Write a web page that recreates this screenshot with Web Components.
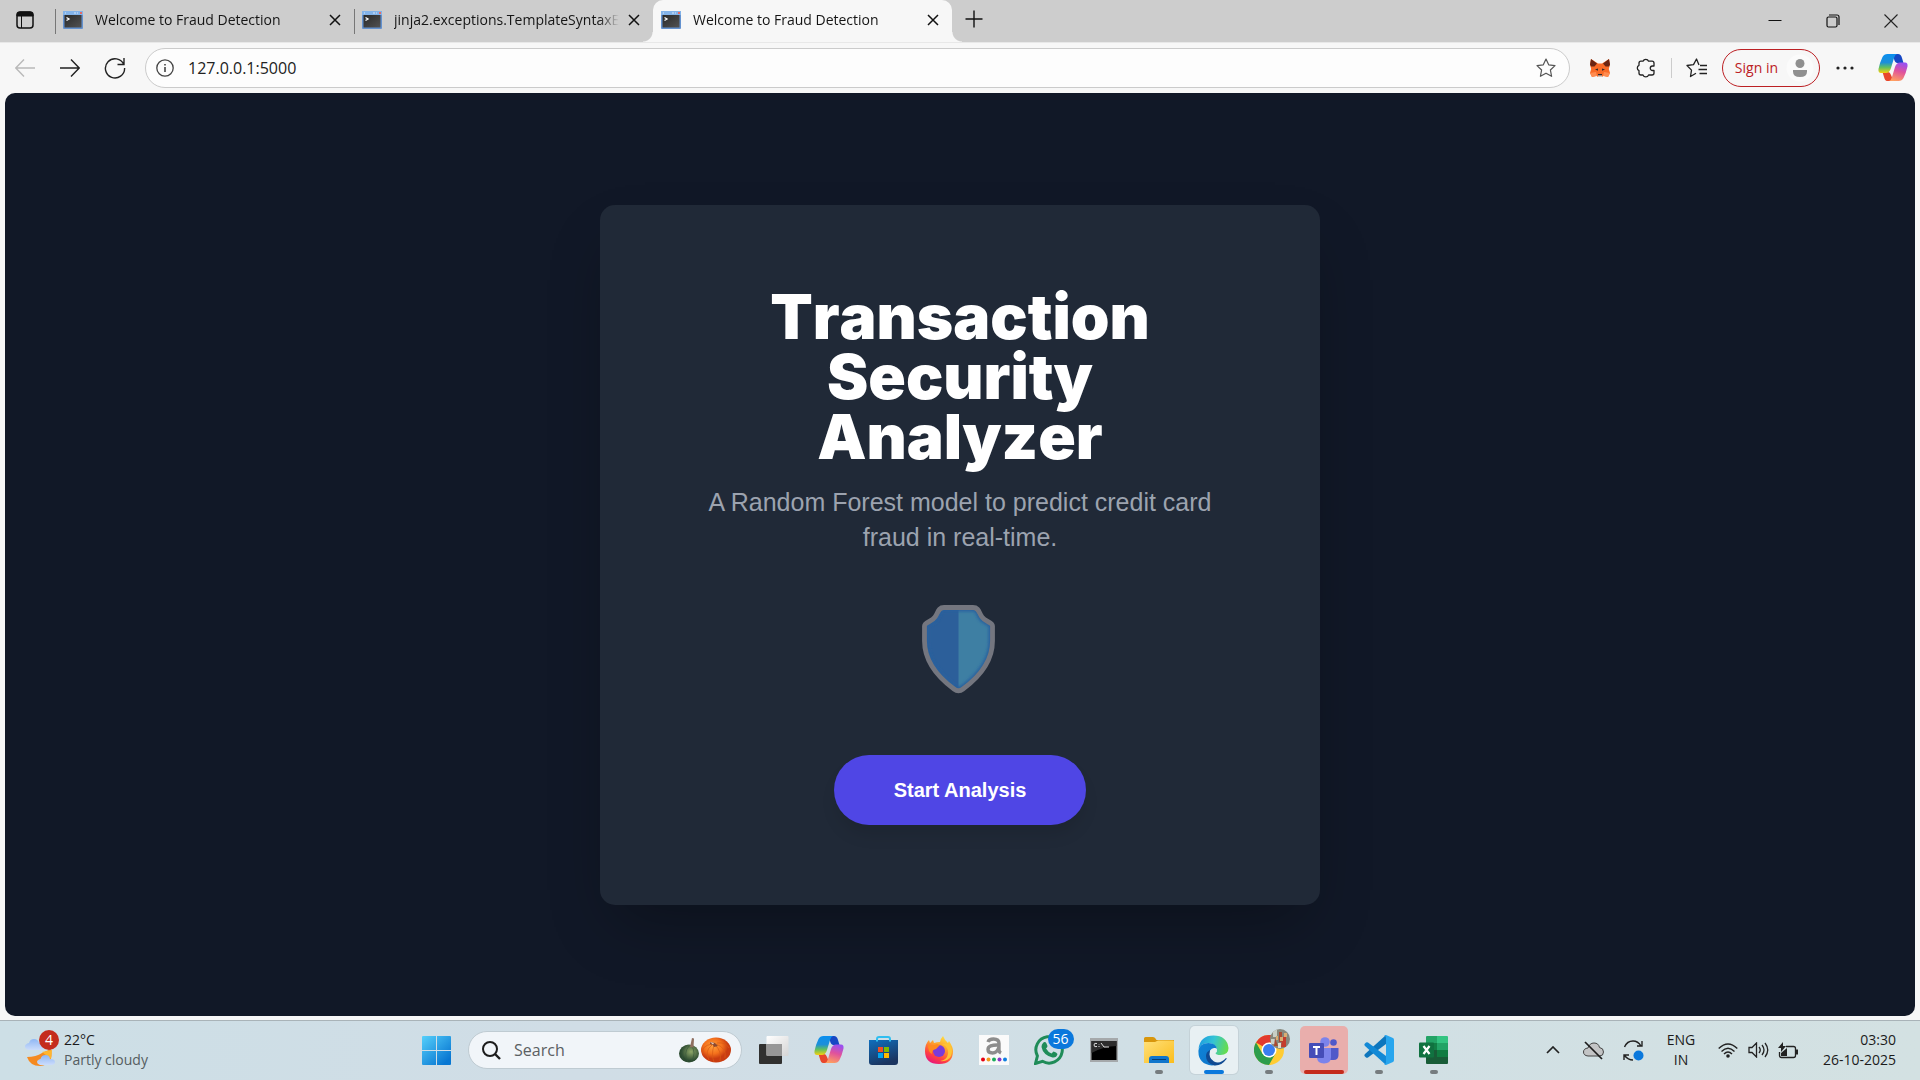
<!DOCTYPE html>
<html lang="en">
<head>
<meta charset="utf-8">
<title>Welcome to Fraud Detection</title>
<style>
html,body{margin:0;height:100%}
body{font-family:"Open Sans","Noto Sans",sans-serif;font-size:14px;line-height:20px;color:#1b1b1b;overflow:hidden}
</style>
</head>
<body>
<desktop-screen></desktop-screen>
<script>
const copilot = p => `<svg width="30" height="30" viewBox="0 0 30 30"><defs>
<linearGradient id="${p}a" x1="0" y1="0" x2="0" y2="1"><stop offset="0" stop-color="#0a8ff0"/><stop offset=".45" stop-color="#1d8fd8"/><stop offset=".7" stop-color="#5fbf60"/><stop offset="1" stop-color="#f5d010"/></linearGradient>
<linearGradient id="${p}b" x1=".6" y1="0" x2=".3" y2="1"><stop offset="0" stop-color="#9a50f0"/><stop offset=".45" stop-color="#e0529c"/><stop offset="1" stop-color="#ffa060"/></linearGradient></defs>
<path d="M14 1h6q3 0 4 4l1.500 5h-6Q17 10 16 6z" fill="#1647c4"/>
<path d="M9 28q-2 0-3-4l-1.500-5H10q2 0 3 3l2 5q.5 1-1 1z" fill="#e8472c"/>
<path d="M9.500 1H19q-2 .5-3 4l-3 10q-1.500 5-5 5H3q-3 0-2.500-4Q2 9 4.500 4 6 1 9.500 1z" fill="url(#${p}a)"/>
<path d="M20.500 28H11q2-.5 3-4l3-10q1.500-4.500 5-4.500h5q3 0 2.500 4Q28 20 25.500 25q-1.500 3-5 3z" fill="url(#${p}b)"/></svg>`;

const ICONS = {
tabs:`<svg width="18" height="18" viewBox="0 0 18 18"><rect x="1" y="1" width="16" height="16" rx="3" fill="none" stroke="#111" stroke-width="1.500"/><path d="M1 5V4q0-3 3-3h10q3 0 3 3v1zM5.500 5v12" stroke="#111" fill="#111"/></svg>`,
console:`<svg width="20" height="18" viewBox="0 0 20 18"><defs><linearGradient id="k" y2="1" x2="1"><stop stop-color="#292929"/><stop offset="1" stop-color="#525252"/></linearGradient></defs><rect width="20" height="18" rx="1" fill="#6492cf"/><path d="M0 0h20v4H0z" fill="#83b3e9"/><path d="M2 2h1M11 2h2M14 2h1" stroke="#d5e7fa"/><path d="M17 2h2" stroke="#e66b67" stroke-width="2"/><path d="M1.500 4h17v12.500h-17z" fill="url(#k)"/><path d="M3.500 6.500 6 8 3.500 9.500" fill="none" stroke="#fff" stroke-width="1.300"/></svg>`,
close:`<svg width="12" height="12" viewBox="0 0 12 12"><path d="m1 1 10 10M11 1 1 11" stroke="#111" stroke-width="1.500"/></svg>`,
plus:`<svg width="18" height="18" viewBox="0 0 18 18"><path d="M9 .5v17M.5 9h17" stroke="#111" stroke-width="1.400"/></svg>`,
min:`<svg width="14" height="14" viewBox="0 0 14 14"><path d="M.5 6.500h13" stroke="#111"/></svg>`,
max:`<svg width="14" height="14" viewBox="0 0 14 14"><g fill="none" stroke="#111" stroke-width="1.200"><rect x="1" y="3" width="10" height="10" rx="1.500"/><path d="M3 1h8q2 0 2 2v8"/></g></svg>`,
winclose:`<svg width="14" height="14" viewBox="0 0 14 14"><path d="m.5.5 13 13M13.500.5l-13 13" stroke="#222" stroke-width="1.100"/></svg>`,
back:`<svg width="20" height="18" viewBox="0 0 20 18"><path d="M20 9H1M9 .5.8 9 9 17.500" fill="none" stroke="#b9b9b9" stroke-width="1.400"/></svg>`,
forward:`<svg width="20" height="18" viewBox="0 0 20 18"><path d="M0 9h19M11 .5 19.200 9 11 17.500" fill="none" stroke="#222" stroke-width="1.400"/></svg>`,
reload:`<svg width="22" height="22" viewBox="0 0 22 22"><path d="M19.800 7.500A9.600 9.600 0 1 0 20.600 11M20 1v6.500h-6.500" fill="none" stroke="#222" stroke-width="1.400"/></svg>`,
info:`<svg width="18" height="18" viewBox="0 0 18 18"><circle cx="9" cy="9" r="8.200" fill="none" stroke="#444" stroke-width="1.300"/><path d="M9 8v5M9 5v1.600" stroke="#444" stroke-width="1.600"/></svg>`,
star:`<svg width="20" height="20" viewBox="0 0 20 20"><path d="m10 1 2.700 5.800 6.300.8-4.600 4.400 1.200 6.300L10 15.200l-5.600 3.100 1.200-6.300L1 7.600l6.300-.8z" fill="none" stroke="#555" stroke-width="1.200" stroke-linejoin="round"/></svg>`,
fox:`<svg width="20" height="18" viewBox="0 0 20 18"><path d="M1 0 8 4.500h4L19 0l1 5.500-1.200 4.500 1.200 4-2 4-4.500-1.200L12 18H8l-1.500-1.200L2 18l-2-4 1.200-4L0 5.500z" fill="#f96a26"/><path d="m1 0 6 4.500-2.500 3L1 7.500 0 5.500zM19 0l-6 4.500 2.500 3 3.500 0 1-2z" fill="#6b2412"/><path d="M5 10.500 8 9.500v2.200zM15 10.500 12 9.500v2.200zM8 15h4v1.500H8z" fill="#32292b"/><path d="M8 16.500h4V18H8z" fill="#d8c5bb"/><path d="M0 14l6-1 1 4-5 1zM20 14l-6-1-1 4 5 1z" fill="#ff8c50"/></svg>`,
puzzle:`<svg width="20" height="20" viewBox="0 0 20 20"><path d="M7 3.200a3 3 0 0 1 5.600 0H16q2 0 2 2V8h-1.500a2.200 2.200 0 0 0 0 4.500H18V15q0 2-2 2h-3.400a3 3 0 0 1-5.600 0H5q-2 0-2-2v-2.300a3 3 0 0 1 0-5.400V5.200q0-2 2-2z" fill="none" stroke="#222" stroke-width="1.300" stroke-linejoin="round"/></svg>`,
favs:`<svg width="22" height="20" viewBox="0 0 22 20"><path d="M13 7 10.500 1 7.500 6.600 1 7.500l4.500 4.600-1 6.400L10 15.300M14 7.500h7M12.500 11.500H21M13.500 15.500H21" fill="none" stroke="#222" stroke-width="1.300" stroke-linejoin="round"/></svg>`,
user:`<svg width="28" height="28" viewBox="0 0 28 28"><circle cx="14" cy="14" r="13.500" fill="#fbfbfb"/><circle cx="14" cy="9.500" r="4.500" fill="#909090"/><path d="M7 16h14v1.500q0 5.500-7 5.500t-7-5.500z" fill="#909090"/></svg>`,
dots:`<svg width="18" height="4" viewBox="0 0 18 4"><g fill="#222"><circle cx="2" cy="2" r="1.600"/><circle cx="9" cy="2" r="1.600"/><circle cx="16" cy="2" r="1.600"/></g></svg>`,
copilot:copilot('c'),
shield:`<svg width="76" height="89" viewBox="0 0 76 89"><defs><path id="o" d="M22 2.500H51C57 2.500 57 8 60 12 63 17 70.500 17 70.500 21V36C70.500 55 60 70 41 84Q36.500 87.500 32 84C13 70 2.500 55 2.500 36V21C2.500 17 10 17 13 12 16 8 16 2.500 22 2.500Z"/><clipPath id="h"><path d="M36.500 0H76v89H36.500z"/></clipPath><clipPath id="s"><use href="#o"/></clipPath><filter id="b"><feGaussianBlur stdDeviation="1.500"/></filter></defs><use href="#o" fill="#2c5f9a"/><use href="#o" fill="#3e7fa3" clip-path="url(#h)"/><g clip-path="url(#s)"><use href="#o" fill="none" stroke="#28609f" stroke-width="8" filter="url(#b)"/></g><use href="#o" fill="none" stroke="#74767f" stroke-width="4.800"/></svg>`,
weather:`<svg width="30" height="30" viewBox="0 0 30 30"><defs><linearGradient id="w" y2="1" x2="0"><stop stop-color="#8fb7f4"/><stop offset="1" stop-color="#cbdcfb"/></linearGradient></defs><path d="M2 20q9 0 15-4l9-4q3 16-11 17Q5 29 2 20z" fill="#f58a1f"/><path d="M17 15l10-2-1 9z" fill="#ffb62e"/><path d="M4 13q-4-1-4-3.500T4 6q1-4 5-4t5 4q5 1 5 4t-4 3z" fill="url(#w)"/><path d="M15 28q-3-1-3-3t3.500-3q1-4 5-4t4.500 4q5 0 5 3t-4 3z" fill="url(#w)"/></svg>`,
start:`<svg width="29" height="29" viewBox="0 0 29 29"><defs><linearGradient id="g" gradientUnits="userSpaceOnUse" x2="24" y2="26"><stop stop-color="#56d0fb"/><stop offset="1" stop-color="#0877d2"/></linearGradient></defs><path d="M1 0h13v14H0V1q0-1 1-1zM15 0h13q1 0 1 1v13H15zM0 15h14v14H1q-1 0-1-1zM15 15h14v13q0 1-1 1H15z" fill="url(#g)"/></svg>`,
search:`<svg width="19" height="19" viewBox="0 0 19 19"><circle cx="8" cy="8" r="7" fill="none" stroke="#1c1c1c" stroke-width="2"/><path d="m13 13 5 5" stroke="#1c1c1c" stroke-width="2.400"/></svg>`,
pumpkins:`<svg width="52" height="26" viewBox="0 0 52 26"><defs><radialGradient id="p" cx=".4" cy=".35"><stop stop-color="#ffa23c"/><stop offset=".6" stop-color="#f4711c"/><stop offset="1" stop-color="#c93c10"/></radialGradient><radialGradient id="q" cx=".6" cy=".4"><stop stop-color="#8fa768"/><stop offset="1" stop-color="#2c4a30"/></radialGradient></defs><ellipse cx="10" cy="16.500" rx="10" ry="9" fill="url(#q)"/><path d="M10 9q-6 7-1 16M12 8q6 8 0 17M9 8q-9 5-5 14" fill="none" stroke="#35553a" stroke-width=".6"/><path d="m11 10 2-9 2 .5-.5 9z" fill="#8f6f60"/><ellipse cx="37" cy="13" rx="15" ry="12.500" fill="url(#p)"/><path d="M33 8q-8 6-3 15M35 8q-3 10 0 17M36 8q7 6 5 16M37 7q11 4 9 14M33 7q-11 2-9 9M38 6q9-1 12 5" fill="none" stroke="#d95a14" stroke-width=".7"/><path d="m31 5 5 1 3 3-4 1-1-2-3-1z" fill="#8c4a30"/><path d="m31 5 4 1-1 1.500z" fill="#e6cfc2"/></svg>`,
taskview:`<svg width="30" height="28" viewBox="0 0 30 28"><defs><linearGradient id="t" y2="1" x2="1"><stop stop-color="#fff"/><stop offset="1" stop-color="#d5d5d5"/></linearGradient></defs><rect y="8" width="23" height="20" rx="1" fill="#30302f"/><rect x="7.500" width="22" height="20" rx="1" fill="url(#t)"/><path d="M8 8h15v12H8z" fill="#979797"/></svg>`,
store:`<svg width="29" height="29" viewBox="0 0 29 29"><defs><linearGradient id="m" y2="1" x2=".4"><stop stop-color="#0f6fbe"/><stop offset="1" stop-color="#1b3560"/></linearGradient></defs><path d="M0 4h29v22q0 3-3 3H3q-3 0-3-3z" fill="url(#m)"/><path d="M8 5.500V3q0-2 2-2h9q2 0 2 2v2.500" fill="none" stroke="#2fbef0" stroke-width="2"/><path d="M9 11h5v5H9z" fill="#f25022"/><path d="M15 11h5v5h-5z" fill="#7fba00"/><path d="M9 17h5v5H9z" fill="#00a4ef"/><path d="M15 17h5v5h-5z" fill="#ffb900"/></svg>`,
firefox:`<svg width="28" height="28" viewBox="0 0 28 28"><defs><linearGradient id="f" x1=".8" y1="0" x2=".3" y2="1"><stop stop-color="#ffe743"/><stop offset=".4" stop-color="#ffa02c"/><stop offset=".75" stop-color="#ff4040"/><stop offset="1" stop-color="#e8157c"/></linearGradient></defs><path d="M18 0q2 5 5 7l1-2q4 6 4 10 0 13-14 13T0 15Q0 8 4 4l1 3 3-3 1 3q3-1 6-1 1-4 3-6z" fill="url(#f)"/><circle cx="14" cy="15" r="6" fill="#7a3bd8"/><path d="M3 9q6 1 9-1l3 1-4 4q-5 1-4 5Q3 16 3 9z" fill="#ff8a1e"/><path d="M17 8q7 3 6 10-1 6-8 7 8 1 11-5 3-8-3-13-1 1-6 1z" fill="#ffc434"/></svg>`,
amazon:`<svg width="30" height="30" viewBox="0 0 30 30"><path d="M0 0h30v30H0z" fill="#fafafa"/><g><circle cx="4" cy="24.500" r="2" fill="#e60012"/><circle cx="9.500" cy="24.500" r="2" fill="#f39a1e"/><circle cx="15" cy="24.500" r="2" fill="#1aab5c"/><circle cx="20.500" cy="24.500" r="2" fill="#8a34c8"/><circle cx="26" cy="24.500" r="2" fill="#0c7fe0"/></g><path d="M9 7q1-3 5.500-3Q20 4 20 8.500V15q0 2 2 3M20 10q-11-.5-11 4.500 0 3.500 4.500 3.500T20 12" fill="none" stroke="#8d8d8d" stroke-width="3.400"/></svg>`,
whatsapp:`<svg width="30" height="30" viewBox="0 0 30 30"><path d="M1.500 28.500 3.400 21A13.200 13.200 0 1 1 8.500 26.300z" fill="none" stroke="#1f8c58" stroke-width="3"/><path d="M9 8q2-2 3.500.5l1 2.500q0 1-1.500 2.500 2 3.500 5.500 5l2-2q3 .5 4 2.500-1 4-5 3.500Q9 20 7.500 12 7.500 9.500 9 8z" fill="#1f8c58"/></svg>`,
cmd:`<svg width="28" height="24" viewBox="0 0 28 24"><path d="M0 0h28v24H0z" fill="#a5a9ab"/><path d="M1.500 3h25v19h-25z" fill="#000"/><path d="M1.500 3h25v5q-12 0-25 7z" fill="#2d2d2d"/><path d="M7 5.500q-3-1-3 1.500t3 1.500M9 6v.5M9 8v1M11 5l3 4M14 9h5" fill="none" stroke="#ddd"/></svg>`,
explorer:`<svg width="30" height="27" viewBox="0 0 30 27"><defs><linearGradient id="e" y2="1" x2="1"><stop stop-color="#ffe07a"/><stop offset="1" stop-color="#fbbd1c"/></linearGradient></defs><path d="M0 1.500Q0 0 1.500 0H9q2 0 3.500 3H30v6H0z" fill="#d8960c"/><path d="M0 5h11l3-1.500h15q1 0 1 1V26H0z" fill="url(#e)"/><path d="M5 26v-4q0-3 3-3h14q3 0 3 3v4z" fill="#1176cc"/><path d="M8 22.500h14" stroke="#073e72"/></svg>`,
edge:`<svg width="31" height="31" viewBox="0 0 31 31"><defs><linearGradient id="d" x1="0" y1=".2" x2="1" y2=".4"><stop stop-color="#1d9be2"/><stop offset=".5" stop-color="#34c4d4"/><stop offset="1" stop-color="#66dc50"/></linearGradient><linearGradient id="l" x2="1" y2="1"><stop stop-color="#0d84d8"/><stop offset="1" stop-color="#1174c8"/></linearGradient></defs><path d="M.5 14Q2 .5 15.500.5T30.500 13q0 7-8 7-4.500 0-5-2 2-1 1.500-4Q17 8 10.500 8 3 8 .5 14z" fill="url(#d)"/><path d="M.5 15Q2 8 10.500 8 18 8 19 14q-1-1.500-3-1-5 1-5 7 0 8 9 8.500-2.500 2-6 2Q-.5 29 .5 15z" fill="url(#l)"/><path d="M12 15q-2 8 4 11.500 6 3 12-3.500 1 0 .5 1-5 7-12 6.500Q8 28.500 8 21q0-4 4-6z" fill="#104a92"/></svg>`,
chrome:`<svg width="30" height="30" viewBox="0 0 30 30"><circle cx="15" cy="15" r="15" fill="#fc3"/><path d="M15 15 2 7.500A15 15 0 0 1 28 7.500H15z" fill="#e23a2e"/><path d="M2 7.500A15 15 0 0 0 15 30l6.500-11.500L15 15 8.500 18.700z" fill="#2c9d4c"/><circle cx="15" cy="15" r="7.500" fill="#fff"/><circle cx="15" cy="15" r="6" fill="#3a7df0"/></svg>`,
photo:`<svg width="20" height="20" viewBox="0 0 20 20"><defs><clipPath id="r"><circle cx="10" cy="10" r="10"/></clipPath></defs><g clip-path="url(#r)"><path d="M0 0h20v20H0z" fill="#87887c"/><path d="M3 0h4v8H3zM1 10h4v5H1z" fill="#c8cfc6"/><path d="M9 3h3v10H9zM5 9l3 8H4z" fill="#a94a32"/><path d="m12 9 4-3v12h-5z" fill="#c43c2b"/><path d="M10 8h3v4h-3zM6 7h2v4H6zM14 4h3v4h-3z" fill="#d9ad72"/><path d="M8 14h3v5H8z" fill="#dfdccb"/></g></svg>`,
teams:`<svg width="30" height="27" viewBox="0 0 30 27"><circle cx="16" cy="5" r="4.800" fill="#7b83eb"/><circle cx="24.500" cy="5.500" r="3.300" fill="#5059c9"/><path d="M20 11h9.500v7q0 5-5 5H20z" fill="#5059c9"/><path d="M8 11h14v9q0 6.500-7 6.500T8 20z" fill="#7b83eb"/><rect y="6" width="15" height="15" rx="1" fill="#454db8"/><path d="M4 10h7M7.500 10v8" stroke="#fff" stroke-width="2"/></svg>`,
vscode:`<svg width="30" height="30" viewBox="0 0 30 30"><path d="M22 0v9L4 22.500q-1 .5-2 0L.5 21Q0 20 1 19z" fill="#0d76bd"/><path d="M22 30v-9L4 7.500q-1-.5-2 0L.5 9Q0 10 1 11z" fill="#1289d6"/><path d="M22 0l7 3q1 .5 1 2v20q0 1.500-1 2l-7 3q-1 0-2-1 2 .5 2-2V3q0-2.500-2-2 1-1 2-1z" fill="#28a6ee"/></svg>`,
excel:`<svg width="29" height="28" viewBox="0 0 29 28"><path d="M7 1q0-1 1-1h10v7H7z" fill="#23a366"/><path d="M18 0h10q1 0 1 1v6H18z" fill="#33c481"/><path d="M7 7h11v7H7z" fill="#127f45"/><path d="M18 7h11v7H18z" fill="#23a366"/><path d="M7 14h22v13q0 1-1 1H8q-1 0-1-1z" fill="#185c37"/><path d="M18 14h11v7H18z" fill="#107c41"/><rect y="6.500" width="15" height="15" rx="1" fill="#107240"/><path d="m4.500 10 6 8M10.500 10l-6 8" stroke="#fff" stroke-width="2.200"/></svg>`,
chevron:`<svg width="14" height="8" viewBox="0 0 14 8"><path d="m1 7 6-6 6 6" fill="none" stroke="#222" stroke-width="1.700"/></svg>`,
onedrive:`<svg width="21" height="19" viewBox="0 0 21 19"><path d="M5 15q-4.500-.5-4.500-4T5 7q1.500-5 6-5t5.500 4.500q4 .5 4 4.500t-4 4z" fill="#c3c4c5" stroke="#444"/><path d="m2 1 17 17" stroke="#1c1c1c" stroke-width="1.700"/></svg>`,
sync:`<svg width="21" height="21" viewBox="0 0 21 21"><path d="M1.500 7Q4 1 10 1q5 0 8 5M19 1v5h-5M1 20v-5h5M1.500 15.500Q5 20 10 20" fill="none" stroke="#222" stroke-width="1.400"/><circle cx="15.500" cy="15.500" r="5" fill="#0a78dc"/></svg>`,
wifi:`<svg width="20" height="15" viewBox="0 0 20 15"><path d="M.7 5.500q9.300-9 18.600 0M3.500 8.500q6.500-6.500 13 0M6 11q4-4 8 0" fill="none" stroke="#222" stroke-width="1.400"/><circle cx="10" cy="13" r="1.800" fill="#222"/></svg>`,
volume:`<svg width="21" height="16" viewBox="0 0 21 16"><path d="M1 5.500h3L8.500 1v14L4 10.500H1zM11 5q2.500 3 0 6M14 3q4 5 0 10M17 1q5.500 7 0 14" fill="none" stroke="#222" stroke-width="1.300"/></svg>`,
battery:`<svg width="21" height="17" viewBox="0 0 21 17"><path d="M8 4.500h7.500q2 0 2 2v7q0 2-2 2h-12q-2 0-2-2V10" fill="none" stroke="#222" stroke-width="1.300"/><path d="M18 7.500h2v5h-2zM3 14V11l6-5v8zM5 0 0 6h3v4l5-6H5z" fill="#222"/></svg>`
};

const RESET = `*{box-sizing:border-box}button,input{font:inherit;color:inherit;background:none;border:0;padding:0;margin:0;outline:0}button{display:flex;align-items:center;justify-content:center;flex:none;white-space:nowrap}`;
function define(name, render) {
  customElements.define(name, class extends HTMLElement {
    constructor() {
      super();
      this.attachShadow({mode:'open'});
    }
    connectedCallback() {
      this.shadowRoot.innerHTML = `<style>${RESET}</style>` + render(this);
    }
  });
}

define('ui-icon', e => `<style>:host{display:flex;flex:none}svg{display:block}</style>${ICONS[e.getAttribute('name')]}`);

define('icon-button', e => `<style>:host{display:block;flex:none;width:30px}button{width:100%;height:30px}</style>
<button aria-label="${e.getAttribute('label')}"><ui-icon name="${e.getAttribute('name')}"></ui-icon></button>`);

define('browser-tab', () => `<style>
:host{display:flex;align-items:center;width:299px;height:42px;padding:0 4px 2px 8px;position:relative;color:#151515}
:host([divided])::before{content:"";position:absolute;left:0;top:9px;height:25px;width:1px;background:#777}
:host([active]){background:#f7f7f7;border-radius:10px 10px 0 0}
:host([active])::before,:host([active])::after{content:"";position:absolute;bottom:0;width:10px;height:10px}
:host([active])::before{left:-10px;background:radial-gradient(circle at 0 0,transparent 9px,#f7f7f7 10px)}
:host([active])::after{right:-10px;background:radial-gradient(circle at 100% 0,transparent 9px,#f7f7f7 10px)}
.title{flex:1;min-width:0;justify-content:flex-start;gap:12px;overflow:hidden}
.text{flex:1;text-align:left;overflow:hidden;-webkit-mask-image:linear-gradient(90deg,#000 calc(100% - 20px),transparent);mask-image:linear-gradient(90deg,#000 calc(100% - 20px),transparent)}
</style>
<button class="title" role="tab"><ui-icon name="console"></ui-icon><span class="text"><slot></slot></span></button><icon-button name="close" label="Close tab"></icon-button>`);

define('tab-strip', () => `<style>
:host{display:flex;align-items:center;height:42px;background:#cdcdcd}
.menu{width:50px;margin-right:5px;padding-bottom:2px}
.tabs{display:flex}
.new{margin:0 auto 4px 2px;width:40px}
.controls{display:flex}.controls icon-button{width:58px}</style>
<icon-button class="menu" name="tabs" label="Tab actions"></icon-button>
<div class="tabs" role="tablist"><browser-tab divided>Welcome to Fraud Detection</browser-tab><browser-tab divided>jinja2.exceptions.TemplateSyntaxError</browser-tab><browser-tab active>Welcome to Fraud Detection</browser-tab></div>
<icon-button class="new" name="plus" label="New tab"></icon-button>
<div class="controls"><icon-button name="min" label="Minimize"></icon-button><icon-button name="max" label="Restore"></icon-button><icon-button name="winclose" label="Close"></icon-button></div>`);

define('address-bar', () => `<style>
:host{display:flex;align-items:center;flex:1;min-width:0;height:40px;margin:0 15px;padding:0 8px 0 10px;gap:14px;border:1px solid #cbcbcb;border-radius:20px;background:#fdfdfd}
input{flex:1;min-width:0;font-size:16px;line-height:24px;color:#222}</style>
<ui-icon name="info"></ui-icon><input type="text" aria-label="Address" value="127.0.0.1:5000"><icon-button name="star" label="Add to favorites"></icon-button>`);

define('tool-bar', () => `<style>
:host{display:flex;align-items:center;height:51px;padding:0 12px 0 10px;background:#f7f7f7;border-top:1px solid #e8e8e8}
.nav{display:flex;gap:15px}
.tools{display:flex;align-items:center;gap:10px}
.ext{display:flex;gap:16px}
hr{margin:0;width:1px;height:20px;border:0;background:#ccc}
.sign{height:38px;width:98px;gap:8px;padding-right:5px;justify-content:flex-end;border:1px solid #bc2024;border-radius:19px;color:#bc2024}
.end{display:flex;gap:18px}</style>
<nav class="nav"><icon-button name="back" label="Back"></icon-button><icon-button name="forward" label="Forward"></icon-button><icon-button name="reload" label="Refresh"></icon-button></nav>
<address-bar></address-bar>
<div class="tools"><div class="ext"><icon-button name="fox" label="Wallet"></icon-button><icon-button name="puzzle" label="Extensions"></icon-button></div><hr><icon-button name="favs" label="Favorites"></icon-button><button class="sign">Sign in<ui-icon name="user"></ui-icon></button><div class="end"><icon-button name="dots" label="More"></icon-button><icon-button name="copilot" label="Copilot"></icon-button></div></div>`);

define('welcome-card', () => `<style>
:host{display:flex;flex-direction:column;align-items:center;width:720px;padding:80px;background:#202937;border-radius:15px;text-align:center;font-family:"Liberation Sans",Arial,sans-serif;box-shadow:0 30px 60px -15px rgba(0,0,0,.3)}
h1{margin:0;padding:2px 0 18px;width:440px;font:900 62px/60px Inter,"Liberation Sans",sans-serif;font-kerning:none;color:#fff}
p{margin:0 0 50px;font-size:25px;line-height:35px;color:#9ca3af}
a{margin-top:61px;padding:20px 60px;border-radius:35px;background:#4f46e5;color:#fff;font-size:20px;line-height:30px;font-weight:700;text-decoration:none;box-shadow:0 12px 18px -4px rgba(0,0,0,.12)}</style>
<h1>Transaction Security Analyzer</h1><p>A Random Forest model to predict credit card fraud in real-time.</p><ui-icon name="shield"></ui-icon><a href="#">Start Analysis</a>`);

define('browser-window', () => `<style>
:host{display:flex;flex-direction:column;flex:1;min-height:0;background:#f7f7f7}
main{flex:1;margin:0 5px 4px;display:flex;align-items:center;justify-content:center;border-radius:10px;background:#111827}</style>
<tab-strip></tab-strip><tool-bar></tool-bar><main><welcome-card></welcome-card></main>`);

define('weather-widget', () => `<style>
:host{display:flex}button{gap:9px;text-align:left}.pic{position:relative;padding-top:4px}
.badge{position:absolute;left:14px;top:-3px;width:20px;height:20px;border-radius:10px;background:#c42b1c;color:#fff;text-align:center}
small{display:block;font-size:14px;color:#555d61}</style>
<button><span class="pic"><ui-icon name="weather"></ui-icon><span class="badge">4</span></span><span>22°C<small>Partly cloudy</small></span></button>`);

define('task-item', e => `<style>
:host{display:flex;width:55px;justify-content:center;flex:none}
button{position:relative;width:48px;height:48px;border-radius:5px}
:host([state=active]) button{background:#e8f0f3;box-shadow:0 0 0 1px #c5d2d8}
:host([state=alert]) button{background:#e9aeac}
:host([state])  button::after{content:"";position:absolute;bottom:0;height:4px;border-radius:2px;width:8px;background:#767c7f}
:host([state=active]) button::after{width:20px;background:#0a78dc}
:host([state=alert]) button::after{width:40px;background:#c42b1c}
.badge{position:absolute;right:-1px;top:3px;width:26px;height:20px;border-radius:10px;background:#0a78dc;color:#fff}
.photo{position:absolute;right:3px;top:3px}</style>
<button aria-label="${e.getAttribute('label')}"><ui-icon name="${e.getAttribute('name')}"></ui-icon>${e.hasAttribute('badge')?`<span class="badge">${e.getAttribute('badge')}</span>`:''}${e.hasAttribute('profile')?'<ui-icon class="photo" name="photo"></ui-icon>':''}</button>`);

define('search-box', () => `<style>
:host{display:flex;align-items:center;width:274px;height:38px;margin:0 4px;padding:0 10px 0 13px;gap:13px;border:1px solid #bfcbd2;border-radius:19px;background:#f1f5f9}
input{flex:1;min-width:0;font-size:16px;line-height:22px}input::placeholder{color:#5b6063;opacity:1}</style>
<ui-icon name="search"></ui-icon><input type="search" aria-label="Search" placeholder="Search"><ui-icon name="pumpkins"></ui-icon>`);

define('system-tray', () => `<style>
:host{display:flex;align-items:center;justify-content:flex-end}
.hidden icon-button{width:40px}.hidden,.status{display:flex}
.lang{width:56px;margin-right:4px}.clock{min-width:78px;margin-left:15px;justify-content:flex-end;text-align:right}</style>
<div class="hidden"><icon-button name="chevron" label="Hidden icons"></icon-button><icon-button name="onedrive" label="OneDrive"></icon-button><icon-button name="sync" label="Update"></icon-button></div>
<button class="lang"><span>ENG<br>IN</span></button><div class="status"><icon-button name="wifi" label="Network"></icon-button><icon-button name="volume" label="Volume"></icon-button><icon-button name="battery" label="Battery"></icon-button></div><button class="clock"><span>03:30<br>26-10-2025</span></button>`);

define('task-bar', () => {
  const apps = [['taskview','Task view'],['copilot','Copilot'],['store','Store'],['firefox','Firefox'],['amazon','Shopping'],['whatsapp','WhatsApp','badge="56"'],['cmd','Command Prompt'],['explorer','File Explorer','state="open"'],['edge','Edge','state="active"'],['chrome','Chrome','state="open" profile'],['teams','Teams','state="alert"'],['vscode','VS Code','state="open"'],['excel','Excel','state="open"']];
  return `<style>
:host{display:grid;grid-template-columns:minmax(0,41fr) auto minmax(0,46fr);align-items:center;box-sizing:border-box;height:60px;padding-bottom:1px;border-top:1px solid #a9b3b8;background:linear-gradient(90deg,#cddfe6,#d0dde6 30%,#d0dfe5 60%,#d3e1e2)}
weather-widget{padding-left:25px}.apps{display:flex;align-items:center}system-tray{padding-right:24px}</style>
<weather-widget></weather-widget><div class="apps"><task-item name="start" label="Start"></task-item><search-box></search-box>${apps.map(([n,l,x=''])=>`<task-item name="${n}" label="${l}" ${x}></task-item>`).join('')}</div><system-tray></system-tray>`;
});

define('desktop-screen', () => `<style>:host{display:flex;flex-direction:column;height:100vh}</style><browser-window></browser-window><task-bar></task-bar>`);
</script>
</body>
</html>
